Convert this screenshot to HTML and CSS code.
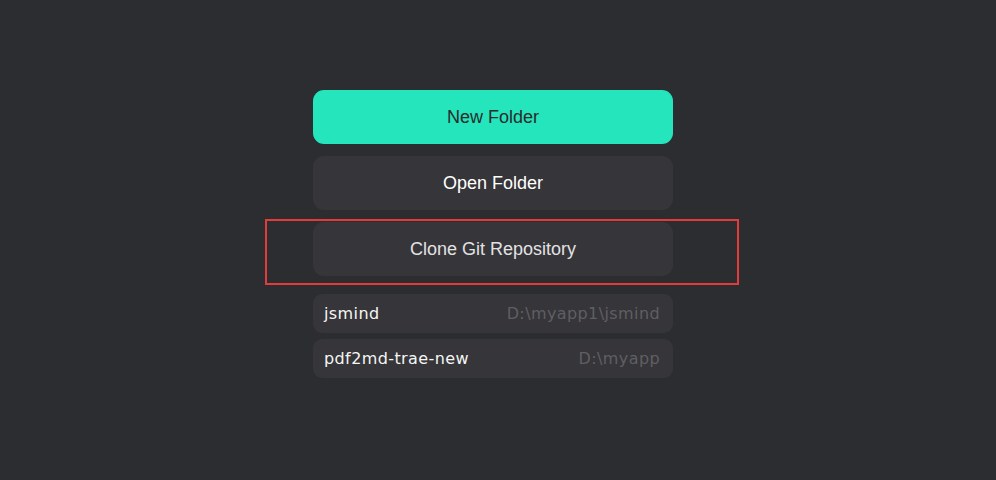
FILE: index.html
```html
<!DOCTYPE html>
<html>
<head>
<meta charset="utf-8">
<link rel="stylesheet" href="styles.css">
</head>
<body>
<div class="page">
  <div class="panel">
    <button class="btn btn-primary">New Folder</button>
    <button class="btn">Open Folder</button>
    <div class="highlight">
      <button class="btn btn-muted">Clone Git Repository</button>
    </div>
    <ul class="recent">
      <li class="item"><span class="name">jsmind</span><span class="path">D:\myapp1\jsmind</span></li>
      <li class="item"><span class="name">pdf2md-trae-new</span><span class="path">D:\myapp</span></li>
    </ul>
  </div>
</div>
</body>
</html>
```
FILE: styles.css
```css
html, body {
  margin: 0;
  padding: 0;
  background: #2c2d31;
  height: 100%;
}
.page {
  display: flex;
  justify-content: center;
  padding: 90px 10px 0 0;
}
.panel {
  width: 360px;
  display: flex;
  flex-direction: column;
}
.btn {
  display: block;
  width: 360px;
  height: 54px;
  border: none;
  border-radius: 11px;
  background: #363539;
  color: #ffffff;
  font-family: "Liberation Sans", Arial, sans-serif;
  font-size: 18px;
  margin: 0 0 12px 0;
  padding: 0;
}
.btn-primary {
  background: #24e5bb;
  color: #2b2b2e;
}
.btn-muted {
  color: #e2e2e4;
  margin: 0;
}
.highlight {
  margin: -3px -66px 9px -48px;
  border: 2px solid #e23b3b;
  padding: 1px 64px 7px 46px;
}
.recent {
  list-style: none;
  margin: 0;
  padding: 0;
  display: flex;
  flex-direction: column;
  gap: 6px;
}
.item {
  height: 39px;
  border-radius: 9px;
  background: #363539;
  display: flex;
  align-items: center;
  justify-content: space-between;
  padding: 0 13px 0 11px;
  font-family: "DejaVu Sans", sans-serif;
  font-size: 16px;
  letter-spacing: 0.4px;
}
.name {
  color: #f5f5f5;
}
.path {
  color: #5f5f63;
}
```
